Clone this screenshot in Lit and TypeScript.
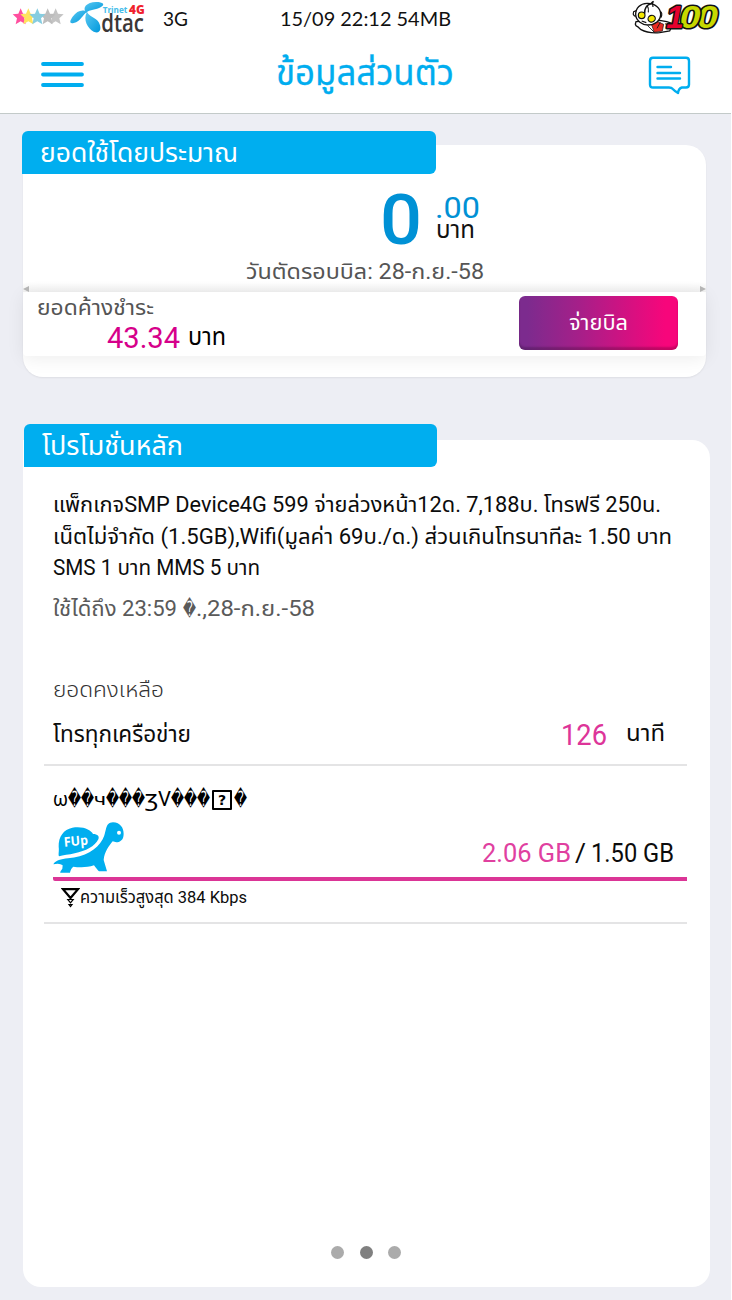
import { LitElement, html, svg, css } from "lit";
import { customElement, state } from "lit/decorators.js";

/** One line of text, condensed or widened to fill the width of its box. */
@customElement("fit-text")
class FitText extends LitElement {
  @state() ratio = 1;
  static styles = css`
    :host { display: block; white-space: nowrap; flex: none; }
    .run { display: inline-block; transform-origin: 0 50%; }
  `;
  async firstUpdated() {
    await document.fonts.ready;
    const run = this.renderRoot.querySelector(".run") as HTMLElement;
    const natural = run.getBoundingClientRect().width;
    if (natural) this.ratio = this.clientWidth / natural;
  }
  render() {
    return html`<span class="run" style="transform:scaleX(${this.ratio})"><slot></slot></span>`;
  }
}

@customElement("status-bar")
class StatusBar extends LitElement {
  static styles = css`
    :host { display: flex; height: 38px; line-height: 36px; color: #111; font-size: 20px; font-family: Lato, "Open Sans", sans-serif; }
    svg { display: block; flex: none; overflow: visible; }
    .stars { width: 51px; height: 18px; margin: 8px 0 0 12px; }
    .logo { width: 76px; height: 33px; margin: 1px 0 0 7px; }
    .net { width: 25px; margin-left: 17px; }
    .clock { width: 171px; margin-left: 92px; }
    .hundred { width: 88px; height: 34px; margin: 1px 11px 0 auto; }
    .dtac { font: 600 77px "Open Sans", sans-serif; fill: #3b3636; }
    .tri { font: 700 26px "Open Sans", sans-serif; fill: #45bdea; }
    .four { font: 800 37px "Open Sans", sans-serif; fill: #f0202c; }
    .num { font: italic 700 94px "Liberation Sans", sans-serif; stroke: #111; stroke-width: 9px; paint-order: stroke; stroke-linejoin: round; }
    .red { fill: #e6002d; }
    .lime { fill: #c6d800; }
  `;
  render() {
    const star = (x: number, c: string) =>
      svg`<path transform="translate(${x} 26)" fill=${c} d="M0-25 7-9 24-7 11 5 15 23 0 14-15 23-11 5-24-7-7-9Z"/>`;
    return html`
      <svg class="stars" viewBox="36 0 153 54">
        ${star(167, "#c4c4c4")}${star(143, "#bdbdbd")}${star(62, "#ff4f9f")}${star(85, "#ffe45e")}${star(112, "#86cde0")}
      </svg>
      <svg class="logo" viewBox="208 3 228 99">
        <defs>
          <linearGradient id="p" x1="0" y1="0" x2="1" y2="1"><stop offset="0" stop-color="#59c8f2"/><stop offset="1" stop-color="#0098dc"/></linearGradient>
        </defs>
        <path fill="url(#p)" d="M257 38C243 24 258 6 286 6 308 6 314 14 301 21 286 31 267 27 257 38Z"/>
        <path fill="url(#p)" d="M260 36C245 26 228 34 217 49 206 64 206 72 219 69 241 65 245 43 260 36Z"/>
        <path fill="url(#p)" d="M259 36C246 58 261 86 279 95 296 102 302 91 298 76 293 52 268 54 259 36Z"/>
        <text class="dtac" x="302" y="95" textLength="128" lengthAdjust="spacingAndGlyphs">dtac</text>
        <text class="tri" x="306" y="38" textLength="74" lengthAdjust="spacingAndGlyphs">Trinet</text>
        <text class="four" x="385" y="42" textLength="47" lengthAdjust="spacingAndGlyphs">4G</text>
      </svg>
      <fit-text class="net">3G</fit-text>
      <fit-text class="clock">15/09 22:12 54MB</fit-text>
      <svg class="hundred" viewBox="101 2 264 102">
        <path d="M113 64Q108 76 118 79L128 88Q150 100 184 97L214 92 224 70 205 64 184 60Z" fill="#fff" stroke="#111" stroke-width="4"/>
        <path d="M160 74 178 64 196 72 192 92 168 96Z" fill="#e62a22" stroke="#111" stroke-width="2"/>
        <path d="M148 76 168 96M200 70 218 78M186 66 176 84" stroke="#111" stroke-width="2.500" fill="none"/>
        <path d="M112 42C112 22 126 10 146 9 170 8 187 24 187 42 187 62 168 74 148 74 134 74 112 62 112 42Z" fill="#fff" stroke="#111" stroke-width="4"/>
        <path d="M139 40C137 26 146 12 158 10L166 3" fill="none" stroke="#111" stroke-width="4.500"/>
        <path d="M112 48Q102 46 106 34L114 31M162 4 164 20M185 34Q194 36 188 52M146 14Q152 24 150 36" fill="none" stroke="#111" stroke-width="3.500"/>
        <ellipse cx="130" cy="45" rx="10" ry="10" fill="#f3e600" stroke="#111" stroke-width="3.500"/>
        <ellipse cx="160" cy="55" rx="11" ry="10" transform="rotate(-25 160 55)" fill="#f3e600" stroke="#111" stroke-width="3.500"/>
        <path d="M130 62 144 67" stroke="#111" stroke-width="3.500"/>
        <text class="num lime" x="297" y="82" textLength="62" lengthAdjust="spacingAndGlyphs">0</text>
        <text class="num lime" x="244" y="82" textLength="62" lengthAdjust="spacingAndGlyphs">0</text>
        <text class="num red" x="204" y="82" textLength="52" lengthAdjust="spacingAndGlyphs">1</text>
      </svg>`;
  }
}

@customElement("nav-bar")
class NavBar extends LitElement {
  static styles = css`
    :host { display: flex; height: 75px; border-bottom: 1px solid #c3cac9; color: #00adef; }
    svg { display: block; flex: none; }
    .menu { width: 43px; height: 26px; margin: 24px 0 0 40.5px; }
    .title { width: 178px; margin-left: 192px; font-size: 36px; line-height: 70px; -webkit-text-stroke: 0.3px; }
    .chat { width: 43px; height: 40px; margin: 17px 40px 0 auto; }
  `;
  render() {
    return html`
      <svg class="menu" viewBox="0 0 43 26" stroke="currentColor" stroke-width="3.8" stroke-linecap="round"><path d="M2 2H41M2 12.5H41M2 23H41"/></svg>
      <fit-text class="title">ข้อมูลส่วนตัว</fit-text>
      <svg class="chat" viewBox="0 0 43 40" fill="none" stroke="currentColor" stroke-width="2.400" stroke-linecap="round" stroke-linejoin="round">
        <path d="M5 2.800H38Q41 2.800 41 6V29.500Q41 32.500 38 32.500H34Q30.500 33.500 30 38 26.500 36 24.500 33.800 23.500 32.500 21 32.500H5Q2 32.500 2 29.500V6Q2 2.800 5 2.800Z"/>
        <path d="M9.500 12H23M9.500 18H32M9.500 23.500H32"/>
      </svg>`;
  }
}

@customElement("bill-card")
class BillCard extends LitElement {
  static styles = css`
    :host { display: block; width: 684px; margin: 17px 0 0 22px; }
    .tab { position: relative; box-sizing: border-box; width: 414px; height: 43px; margin-bottom: -29px; padding-left: 18px; background: #00aeef; border-radius: 6px 6px 6px 0; color: #fff; }
    .name { width: 198px; font-size: 26px; line-height: 45px; }
    .card { box-sizing: border-box; height: 232px; margin-left: 1px; padding-top: 41px; background: #fff; border-radius: 0 20px 20px 20px; box-shadow: 0 1px 2px #0001; }
    .sum { display: flex; height: 70px; padding-left: 357px; color: #0091d5; }
    .big { width: 42px; font-size: 70px; line-height: 69px; font-weight: 500; }
    .side { padding: 9px 0 0 13px; }
    .dec { width: 45px; font-size: 30px; line-height: 26px; }
    .unit { width: 39px; margin-left: 1px; font-size: 24px; line-height: 18px; color: #111; }
    .cut { width: 238px; margin: 1px 0 0 223px; font-size: 22px; line-height: 30px; color: #555; }
    .edge { display: flex; justify-content: space-between; height: 10px; margin-top: -5px; background: linear-gradient(#fff0, #f0f0f0); }
    .edge i { border: 3px solid transparent; height: 0; margin-top: 4px; }
    .l { border-left-width: 0 !important; border-right: 6px solid #b5b5b5 !important; }
    .r { border-right-width: 0 !important; border-left: 6px solid #b5b5b5 !important; }
    .due { display: flex; box-sizing: border-box; height: 64px; padding: 0 28px 0 14px; background: #fff; border-radius: 4px; box-shadow: 0 3px 18px #00000012; }
    .label { width: 117px; font-size: 22px; line-height: 32px; color: #555; }
    .owed { display: flex; line-height: 29px; padding-left: 70px; }
    .amt { width: 73px; font-size: 29px; color: #d6008a; }
    .baht { width: 38px; margin: -1px 0 0 8px; font-size: 24px; color: #000; }
    .pay { display: flex; justify-content: center; width: 159px; height: 54px; margin: 4px 0 0 auto; border: 0; padding: 0; border-radius: 6px; background: linear-gradient(90deg, #7c2b8e 5%, #a61f89 38%, #f7067b 92%); box-shadow: inset 0 -3px 2px #0003; color: #fff; font-family: inherit; }
    .go { width: 59px; font-size: 22px; line-height: 54px; }
  `;
  render() {
    return html`
      <div class="tab"><fit-text class="name">ยอดใช้โดยประมาณ</fit-text></div>
      <div class="card">
        <div class="sum">
          <fit-text class="big">0</fit-text>
          <div class="side">
            <fit-text class="dec">.00</fit-text>
            <fit-text class="unit">บาท</fit-text>
          </div>
        </div>
        <fit-text class="cut">วันตัดรอบบิล: 28-ก.ย.-58</fit-text>
        <div class="edge"><i class="l"></i><i class="r"></i></div>
        <div class="due">
          <div>
            <fit-text class="label">ยอดค้างชำระ</fit-text>
            <div class="owed"><fit-text class="amt">43.34</fit-text><fit-text class="baht">บาท</fit-text></div>
          </div>
          <button class="pay"><fit-text class="go">จ่ายบิล</fit-text></button>
        </div>
      </div>`;
  }
}

@customElement("promo-card")
class PromoCard extends LitElement {
  static styles = css`
    :host { display: block; width: 686px; margin: 47px 0 0 24px; line-height: 30px; }
    .tab { position: relative; box-sizing: border-box; width: 413px; height: 43px; margin-bottom: -27px; padding-left: 18px; background: #00aeef; border-radius: 6px 6px 6px 0; color: #fff; }
    .name { width: 141px; font-size: 26px; line-height: 45px; }
    .card { display: flow-root; box-sizing: border-box; height: 847px; margin-left: -1px; padding: 49px 23px 0 21px; background: #fff; border-radius: 0 18px 18px 18px; color: #0c0c0c; }
    .text { padding-left: 9px; font-size: 22px; line-height: 31.5px; }
    .a { width: 608px; }
    .b { width: 619px; }
    .c { width: 207px; }
    .until { display: flex; margin: 10px 0 0 9px; font-size: 22px; color: #5a5a5a; }
    .u1 { width: 124px; }
    .u2 { width: 13px; margin-left: 6px; }
    .u3 { width: 119px; }
    .left { width: 111px; margin: 51px 0 0 9px; font-size: 22px; font-weight: 300; color: #333; }
    .calls { display: flex; height: 44px; margin-top: 15px; padding: 0 22px 0 9px; border-bottom: 2px solid #e4e4e5; font-size: 23px; }
    .net { width: 138px; margin-right: auto; }
    .min { width: 46px; font-size: 30px; color: #dd3599; }
    .mu { width: 39px; margin: -1px 0 0 19px; }
    .data { display: flex; margin: 18px 0 0 9px; font-size: 21px; color: #000; height: 30px; }
    .rep { font-family: "DejaVu Sans", sans-serif; font-size: 21px; }
    .w1 { width: 13px; } .w2 { width: 26px; } .w3 { width: 39px; }
    .om { width: 15px; } .che { width: 12px; font-size: 17px; } .ezh { width: 13px; } .vee { width: 13px; }
    .box { box-sizing: border-box; width: 20px; height: 20px; margin: 6px 2px 0; border: 2px solid #000; border-radius: 1px; font: 700 14px/16px "DejaVu Sans", sans-serif; text-align: center; }
    .quota { display: flex; box-sizing: border-box; height: 67px; margin-left: 9px; padding: 8px 13px 0 0; border-bottom: 4px solid #db3596; border-radius: 2px 0 0 2px; font-size: 26px; }
    .turtle { width: 71px; height: 52px; margin-right: auto; }
    .fup { font: 700 40px "Open Sans", sans-serif; fill: #fff; }
    .used { width: 89px; color: #e0409f; margin-top: 16px; }
    .sl { width: 11px; margin: 16px 5px 0 4px; }
    .cap { width: 83px; margin-top: 16px; }
    .note { display: flex; height: 41px; padding-left: 17px; border-bottom: 2px solid #e4e4e5; font-size: 17px; }
    .fast { width: 19px; height: 22px; margin-top: 6px; }
    .speed { width: 167px; line-height: 32px; }
    .dots { display: flex; gap: 15.5px; margin: 322px 0 0 287px; }
    .dots i { width: 13px; height: 13px; border-radius: 50%; background: #ababab; }
    .dots .on { background: #808080; }
  `;
  render() {
    return html`
      <div class="tab"><fit-text class="name">โปรโมชั่นหลัก</fit-text></div>
      <div class="card">
        <div class="text">
          <fit-text class="a">แพ็กเกจSMP Device4G 599 จ่ายล่วงหน้า12ด. 7,188บ. โทรฟรี 250น.</fit-text>
          <fit-text class="b">เน็ตไม่จำกัด (1.5GB),Wifi(มูลค่า 69บ./ด.) ส่วนเกินโทรนาทีละ 1.50 บาท</fit-text>
          <fit-text class="c">SMS 1 บาท MMS 5 บาท</fit-text>
        </div>
        <div class="until"><fit-text class="u1">ใช้ได้ถึง 23:59</fit-text><fit-text class="rep u2">�</fit-text><fit-text class="u3">.,28-ก.ย.-58</fit-text></div>
        <fit-text class="left">ยอดคงเหลือ</fit-text>
        <div class="calls">
          <fit-text class="net">โทรทุกเครือข่าย</fit-text>
          <fit-text class="min">126</fit-text>
          <fit-text class="mu">นาที</fit-text>
        </div>
        <div class="data">
          <fit-text class="om">ω</fit-text><fit-text class="rep w2">��</fit-text><fit-text class="che">ч</fit-text><fit-text class="rep w3">���</fit-text><fit-text class="ezh">ʒ</fit-text><fit-text class="vee">V</fit-text><fit-text class="rep w3">���</fit-text><span class="box">?</span><fit-text class="rep w1">�</fit-text>
        </div>
        <div class="quota">
          <svg class="turtle" viewBox="70 456 213 156" fill="#00aeef">
            <path d="M88 559C85 552 89 545 87 530 86 500 102 478 128 473 160 467 185 480 190 492 204 492 210 499 206 508 196 529 168 543 135 550 118 554 100 556 88 559Z"/>
            <path d="M71 583C78 571 94 567 115 565 165 561 202 540 219 508 232 486 224 458 250 457 276 458 285 480 281 500 278 515 262 520 249 514 238 528 224 546 222 570L232 604H208Q203 600 193 586C170 594 146 592 131 590 125 594 122 602 121 608H92Q90 606 98 596L99 586Q90 578 71 583Z"/>
            <circle cx="268" cy="488" r="6" fill="#fff"/>
            <text class="fup" x="104" y="530" textLength="72" lengthAdjust="spacingAndGlyphs" transform="rotate(-5 104 530)">FUp</text>
          </svg>
          <fit-text class="used">2.06 GB</fit-text><fit-text class="sl">/</fit-text><fit-text class="cap">1.50 GB</fit-text>
        </div>
        <div class="note">
          <svg class="fast" viewBox="0 0 19 22" fill="none" stroke="#000">
            <path stroke-width="2.200" d="M2 2.200H17L9.500 11Z"/>
            <path stroke-width="1.200" d="M6.800 12.500H12.200L9.500 15.800ZM8 17.500H11L9.500 19.500Z"/>
          </svg>
          <fit-text class="speed">ความเร็วสูงสุด 384 Kbps</fit-text>
        </div>
        <div class="dots"><i></i><i class="on"></i><i></i></div>
      </div>`;
  }
}

@customElement("app-root")
class AppRoot extends LitElement {
  static styles = css`
    :host { display: flow-root; box-sizing: border-box; width: 731px; height: 1300px; overflow: hidden; background: #edeef4; font-family: Roboto, "Noto Sans Thai", "Noto Sans", sans-serif; }
    header { background: #fff; }
  `;
  render() {
    return html`
      <header><status-bar></status-bar><nav-bar></nav-bar></header>
      <bill-card></bill-card>
      <promo-card></promo-card>`;
  }
}
